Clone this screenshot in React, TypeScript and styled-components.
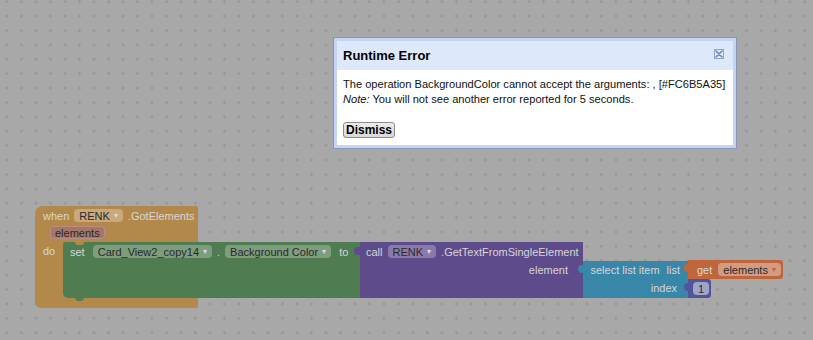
import styled, { createGlobalStyle } from "styled-components";

const GlobalStyle = createGlobalStyle`
  html, body {
    margin: 0;
    padding: 0;
  }
  body {
    font-family: "Liberation Sans", Arial, sans-serif;
    background: #a8a8a8;
  }
`;

const palette = {
  event: "#b3894b",
  eventChip: "#c9a97c",
  param: "#a5776a",
  set: "#4f7c50",
  setChip: "#7e9c7e",
  call: "#5e4b8b",
  callChip: "#8a7aab",
  list: "#3887a9",
  get: "#c0663d",
  getChip: "#d49b82",
  num: "#51559b",
  numChip: "#a0a4c9",
  label: "#d6d6d6",
};

type Tone = "event" | "param" | "set" | "call" | "get" | "num";

const chipBg: Record<Tone, string> = {
  event: palette.eventChip,
  param: palette.param,
  set: palette.setChip,
  call: palette.callChip,
  get: palette.getChip,
  num: palette.numChip,
};

export default function App() {
  return (
    <>
      <GlobalStyle />
      <Workspace>
        <BlockStack>
          <EventBlock>
            <BlockRow>
              <Label>when</Label>
              <Chip $tone="event">
                RENK <Arrow>▾</Arrow>
              </Chip>
              <Label>.GotElements</Label>
            </BlockRow>
            <BlockRow $indent={15}>
              <Chip $tone="param" $outlined>
                elements
              </Chip>
            </BlockRow>
            <DoRow>
              <DoLabel>do</DoLabel>
              <Chain>
                <SetBlock>
                  <BlockRow $indent={7}>
                    <Label $after={3}>set</Label>
                    <Chip $tone="set">
                      Card_View2_copy14 <Arrow>▾</Arrow>
                    </Chip>
                    <Label>.</Label>
                    <Chip $tone="set">
                      Background Color <Arrow>▾</Arrow>
                    </Chip>
                    <Label $before={3}>to</Label>
                  </BlockRow>
                </SetBlock>
                <CallBlock>
                  <BlockRow $indent={6}>
                    <Label>call</Label>
                    <Chip $tone="call">
                      RENK <Arrow>▾</Arrow>
                    </Chip>
                    <Label>.GetTextFromSingleElement</Label>
                  </BlockRow>
                  <InputRow $right={15}>
                    <Label>element</Label>
                  </InputRow>
                </CallBlock>
                <ListBlock>
                  <InputRow $right={8} $height={17}>
                    <Label $after={7}>select list item</Label>
                    <Label>list</Label>
                  </InputRow>
                  <InputRow $right={11}>
                    <Label>index</Label>
                  </InputRow>
                </ListBlock>
                <ValueColumn>
                  <GetBlock>
                    <Label>get</Label>
                    <Chip $tone="get">
                      elements <Arrow $color={palette.get}>▾</Arrow>
                    </Chip>
                  </GetBlock>
                  <NumberBlock>
                    <Chip $tone="num">1</Chip>
                  </NumberBlock>
                </ValueColumn>
              </Chain>
            </DoRow>
          </EventBlock>
        </BlockStack>

        <Dialog>
          <DialogFrame>
            <DialogHeader>
              <DialogTitle>Runtime Error</DialogTitle>
              <CloseBox aria-label="close">
                <svg width="8" height="8" viewBox="0 0 8 8">
                  <path
                    d="M1 1 L7 7 M7 1 L1 7"
                    stroke="#6f8abb"
                    strokeWidth="1.6"
                    strokeLinecap="round"
                  />
                </svg>
              </CloseBox>
            </DialogHeader>
            <DialogBody>
              <Message>
                The operation BackgroundColor cannot accept the arguments: ,
                [#FC6B5A35]
              </Message>
              <Message>
                <em>Note:</em> You will not see another error reported for 5
                seconds.
              </Message>
              <DismissButton>Dismiss</DismissButton>
            </DialogBody>
          </DialogFrame>
        </Dialog>
      </Workspace>
    </>
  );
}

// Workspace
const Workspace = styled.div`
  position: relative;
  width: 813px;
  height: 340px;
  overflow: hidden;
  background-color: #a8a8a8;
  background-image: radial-gradient(
    circle at center,
    #969696 0,
    #969696 1px,
    transparent 1.6px
  );
  background-size: 14.5px 14.4px;
  background-position: -0.3px -5.5px;
`;

const BlockStack = styled.div`
  position: absolute;
  left: 35px;
  top: 206px;
`;

// Blocks
const EventBlock = styled.div`
  width: 163px;
  height: 102px;
  box-sizing: border-box;
  background: ${palette.event};
  border-radius: 8px 2px 2px 6px;
  display: flex;
  flex-direction: column;
  padding-top: 1px;
`;

const BlockRow = styled.div<{ $indent?: number }>`
  height: 17px;
  display: flex;
  align-items: center;
  gap: 5px;
  padding-left: ${({ $indent }) => $indent ?? 8}px;
  white-space: nowrap;
`;

const DoRow = styled.div`
  display: flex;
  align-items: flex-start;
  margin-top: 1px;
`;

const DoLabel = styled.span`
  flex: 0 0 28px;
  box-sizing: border-box;
  padding-left: 8px;
  line-height: 18px;
  font-size: 11px;
  color: ${palette.label};
`;

const Chain = styled.div`
  display: flex;
  align-items: flex-start;
  flex-shrink: 0;

  > * {
    flex-shrink: 0;
  }
`;

const SetBlock = styled.div`
  position: relative;
  width: 297px;
  height: 56px;
  box-sizing: border-box;
  padding-top: 1px;
  background: ${palette.set};
  border-radius: 3px 0 0 5px;

  &::before {
    content: "";
    position: absolute;
    left: 12px;
    top: 0;
    width: 9px;
    height: 3px;
    background: ${palette.event};
    border-radius: 0 0 4px 4px;
  }

  &::after {
    content: "";
    position: absolute;
    left: 12px;
    bottom: -3px;
    width: 9px;
    height: 4px;
    background: ${palette.set};
    border-radius: 0 0 4px 4px;
  }
`;

const CallBlock = styled.div`
  position: relative;
  width: 223px;
  height: 56px;
  box-sizing: border-box;
  padding-top: 1px;
  background: ${palette.call};

  &::before {
    content: "";
    position: absolute;
    left: -6px;
    top: 5px;
    width: 7px;
    height: 8px;
    background: ${palette.call};
    border-radius: 4px 0 0 4px;
  }
`;

const InputRow = styled.div<{ $right: number; $height?: number }>`
  height: ${({ $height }) => $height ?? 19}px;
  display: flex;
  align-items: center;
  justify-content: flex-end;
  padding-right: ${({ $right }) => $right}px;
  white-space: nowrap;
`;

const ListBlock = styled.div`
  position: relative;
  width: 105px;
  height: 37px;
  margin-top: 19px;
  background: ${palette.list};

  &::before {
    content: "";
    position: absolute;
    left: -5px;
    top: 4px;
    width: 6px;
    height: 8px;
    background: ${palette.list};
    border-radius: 4px 0 0 4px;
  }
`;

const ValueColumn = styled.div`
  display: flex;
  flex-direction: column;
  margin-top: 18px;
`;

const GetBlock = styled.div`
  position: relative;
  width: 95px;
  height: 19px;
  box-sizing: border-box;
  padding-left: 9px;
  display: flex;
  align-items: center;
  gap: 6px;
  background: ${palette.get};
  border-radius: 0 3px 3px 0;

  &::before {
    content: "";
    position: absolute;
    left: -4px;
    top: 4px;
    width: 5px;
    height: 8px;
    background: ${palette.get};
    border-radius: 4px 0 0 4px;
  }
`;

const NumberBlock = styled.div`
  position: relative;
  width: 23px;
  height: 19px;
  box-sizing: border-box;
  padding-left: 5px;
  display: flex;
  align-items: center;
  background: ${palette.num};
  border-radius: 0 3px 3px 0;

  &::before {
    content: "";
    position: absolute;
    left: -4px;
    top: 4px;
    width: 5px;
    height: 8px;
    background: ${palette.num};
    border-radius: 4px 0 0 4px;
  }
`;

const Label = styled.span<{ $before?: number; $after?: number }>`
  font-size: 11px;
  color: ${palette.label};
  margin-left: ${({ $before }) => $before ?? 0}px;
  margin-right: ${({ $after }) => $after ?? 0}px;
`;

const Chip = styled.span<{ $tone: Tone; $outlined?: boolean }>`
  display: inline-flex;
  align-items: center;
  gap: 4px;
  height: 13px;
  padding: 0 5px;
  border-radius: 4px;
  font-size: 11px;
  color: #2a2a2a;
  background: ${({ $tone }) => chipBg[$tone]};
  box-shadow: ${({ $outlined }) =>
    $outlined ? "inset 0 0 0 1px #b98e80" : "none"};
`;

const Arrow = styled.span<{ $color?: string }>`
  font-size: 8px;
  color: ${({ $color }) => $color ?? "#dcdcdc"};
`;

// Dialog
const Dialog = styled.div`
  position: absolute;
  left: 333px;
  top: 37px;
  width: 404px;
  box-sizing: border-box;
  border: 1px solid #8796b3;
  background: #c4d5f3;
  padding: 3px;
`;

const DialogFrame = styled.div`
  display: flex;
  flex-direction: column;
`;

const DialogHeader = styled.div`
  height: 29px;
  display: flex;
  align-items: center;
  justify-content: space-between;
  padding: 0 9px 0 6px;
  background: #dde8fb;
`;

const DialogTitle = styled.span`
  font-size: 13px;
  font-weight: bold;
  color: #000;
`;

const CloseBox = styled.span`
  width: 10px;
  height: 10px;
  box-sizing: border-box;
  border: 1px solid #8fa6cc;
  display: flex;
  align-items: center;
  justify-content: center;
  margin-top: -3px;
`;

const DialogBody = styled.div`
  background: #fff;
  padding: 7px 6px 7px 6px;
  display: flex;
  flex-direction: column;
  align-items: flex-start;
`;

const Message = styled.div`
  font-size: 11.1px;
  line-height: 15px;
  color: #111;
  white-space: nowrap;
`;

const DismissButton = styled.button`
  margin-top: 15px;
  height: 16px;
  padding: 0 2px;
  font-family: "Liberation Sans", Arial, sans-serif;
  font-size: 12px;
  font-weight: bold;
  color: #000;
  background: linear-gradient(#ececec, #d8d8d8);
  border: 1px solid #8c8c8c;
  border-radius: 3px;
  line-height: 13px;
`;
